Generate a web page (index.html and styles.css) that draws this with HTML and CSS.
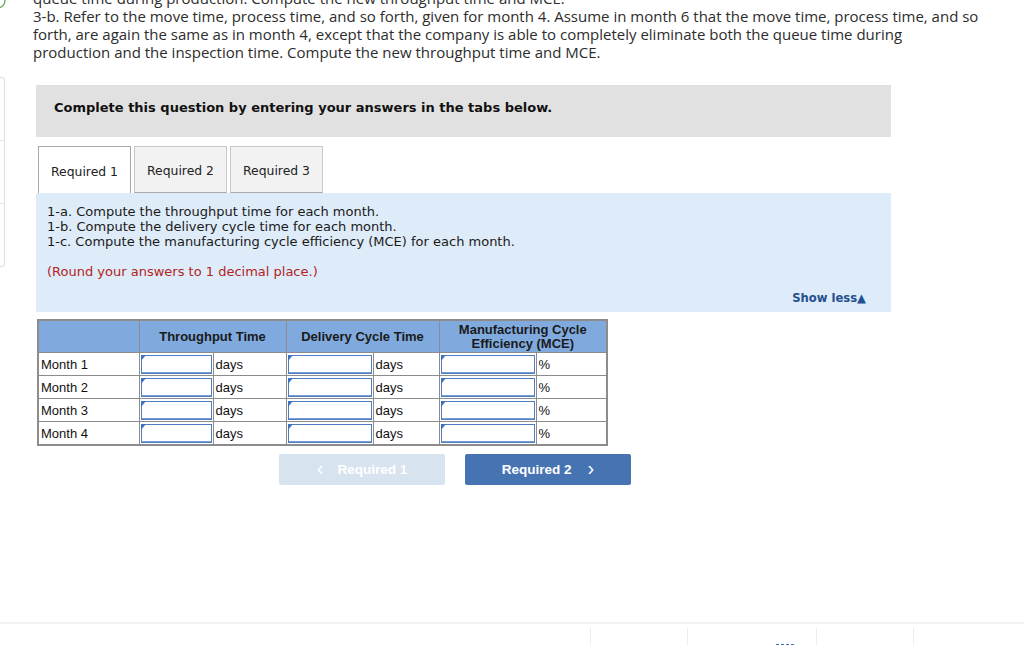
FILE: index.html
```html
<!DOCTYPE html>
<html>
<head>
<meta charset="utf-8">
<link rel="stylesheet" href="styles.css">
</head>
<body>
<div class="page">
  <div class="side">
    <svg class="check-arc" width="8" height="10" viewBox="0 0 8 10"><path d="M5 -1 A 9 9 0 0 1 -1 8" fill="none" stroke="#6aa84f" stroke-width="1.3"/></svg>
    <div class="side-box">
      <div class="side-cell"></div>
      <div class="side-cell"></div>
      <div class="side-cell last"></div>
    </div>
  </div>
  <div class="main">
    <div class="intro">
      <p class="cut">queue time during production. Compute the new throughput time and MCE.</p>
      <p>3-b. Refer to the move time, process time, and so forth, given for month 4. Assume in month 6 that the move time, process time, and so forth, are again the same as in month 4, except that the company is able to completely eliminate both the queue time during production and the inspection time. Compute the new throughput time and MCE.</p>
    </div>
    <div class="quiz">
      <div class="instr">Complete this question by entering your answers in the tabs below.</div>
      <div class="tabs">
        <div class="tab active">Required 1</div>
        <div class="tab">Required 2</div>
        <div class="tab">Required 3</div>
        <div class="tab-rest"></div>
      </div>
      <div class="panel">
        <div class="q">1-a. Compute the throughput time for each month.<br>1-b. Compute the delivery cycle time for each month.<br>1-c. Compute the manufacturing cycle efficiency (MCE) for each month.</div>
        <div class="round">(Round your answers to 1 decimal place.)</div>
        <div class="show-less">Show less&#9650;</div>
      </div>
      <table class="grid">
        <colgroup>
          <col class="c0"><col class="c1"><col class="c2"><col class="c3"><col class="c4"><col class="c5"><col class="c6">
        </colgroup>
        <thead>
          <tr>
            <th></th>
            <th colspan="2">Throughput Time</th>
            <th colspan="2">Delivery Cycle Time</th>
            <th colspan="2" class="mce">Manufacturing Cycle<br>Efficiency (MCE)</th>
          </tr>
        </thead>
        <tbody>
          <tr><td>Month 1</td><td class="in"><div class="box"></div></td><td>days</td><td class="in"><div class="box"></div></td><td>days</td><td class="in"><div class="box"></div></td><td>%</td></tr>
          <tr><td>Month 2</td><td class="in"><div class="box"></div></td><td>days</td><td class="in"><div class="box"></div></td><td>days</td><td class="in"><div class="box"></div></td><td>%</td></tr>
          <tr><td>Month 3</td><td class="in"><div class="box"></div></td><td>days</td><td class="in"><div class="box"></div></td><td>days</td><td class="in"><div class="box"></div></td><td>%</td></tr>
          <tr><td>Month 4</td><td class="in"><div class="box"></div></td><td>days</td><td class="in"><div class="box"></div></td><td>days</td><td class="in"><div class="box"></div></td><td>%</td></tr>
        </tbody>
      </table>
      <div class="nav">
        <div class="btn prev"><span class="chev">&lsaquo;</span>Required 1</div>
        <div class="btn next">Required 2<span class="chev right">&rsaquo;</span></div>
      </div>
    </div>
  </div>
</div>
<div class="footer">
  <div class="f-seg s1"></div>
  <div class="f-seg s2"></div>
  <div class="f-seg s3"><span class="f-mark"></span></div>
  <div class="f-seg s4"></div>
  <div class="f-seg s5"></div>
</div>
</body>
</html>
```
FILE: styles.css
```css
html, body {
  margin: 0;
  padding: 0;
  background: #fff;
}
body {
  width: 1024px;
  height: 645px;
  overflow: hidden;
}
.page {
  display: flex;
  height: 622px;
}
.side {
  width: 5px;
  flex: none;
  display: flex;
  flex-direction: column;
}
.check-arc {
  display: block;
}
.side-box {
  margin-top: 67px;
  width: 4px;
  border: 1px solid #dedede;
  border-left: none;
  border-radius: 0 4px 4px 0;
}
.side-cell {
  height: 62px;
  border-bottom: 1px solid #e6e6e6;
}
.side-cell.last {
  border-bottom: none;
}
.main {
  flex: 1;
}
.intro {
  margin-top: -11px;
  padding-left: 28px;
  font-family: "Open Sans", "Liberation Sans", sans-serif;
  font-size: 15px;
  line-height: 18px;
  color: #2d2d2d;
  width: 947px;
}
.intro p {
  margin: 0;
}
.quiz {
  padding-left: 31px;
  width: 855px;
  margin-top: 24px;
}
.instr {
  background: #e1e1e1;
  height: 52px;
  box-sizing: border-box;
  padding: 15px 0 0 18px;
  font-family: "DejaVu Sans", Verdana, sans-serif;
  font-weight: bold;
  font-size: 13px;
  line-height: 16px;
  color: #111;
}
.tabs {
  display: flex;
  margin-top: 9px;
  padding-left: 2px;
  gap: 3px;
  height: 47px;
}
.tab {
  width: 93px;
  box-sizing: border-box;
  border: 1px solid #c8c8c8;
  border-bottom: 1px solid #a9a9a9;
  background: #f2f2f2;
  font-family: "DejaVu Sans", Verdana, sans-serif;
  font-size: 12.4px;
  color: #222;
  display: flex;
  align-items: center;
  justify-content: center;
  padding-top: 2px;
}
.tab.active {
  background: #fff;
  border-color: #a9a9a9;
  border-bottom: none;
}
.tab-rest {
  flex: 1;
}
.panel {
  background: #deebf8;
  padding: 11px 25px 8px 11px;
  font-family: "DejaVu Sans", Verdana, sans-serif;
  font-size: 13px;
  line-height: 15px;
  color: #1a1a1a;
  height: 119px;
  box-sizing: border-box;
}
.round {
  margin-top: 15px;
  color: #b32424;
}
.show-less {
  text-align: right;
  margin-top: 12px;
  font-weight: bold;
  font-size: 11.6px;
  color: #24508f;
}
.grid {
  margin-top: 7px;
  margin-left: 1px;
  border-collapse: collapse;
  table-layout: fixed;
  width: 569px;
  border: 2px solid #8c8c8c;
  font-family: "Liberation Sans", Arial, sans-serif;
  font-size: 13px;
  color: #111;
}
.c0 { width: 101px; }
.c1 { width: 74px; }
.c2 { width: 73px; }
.c3 { width: 87px; }
.c4 { width: 66px; }
.c5 { width: 97px; }
.c6 { width: 71px; }
.grid th {
  background: #80aade;
  border: 1px solid #8c8c8c;
  height: 31px;
  font-weight: bold;
  font-size: 13px;
  padding: 0;
  color: #1a1a1a;
}
.grid th.mce {
  font-size: 13px;
  line-height: 14px;
}
.grid td {
  border: 1px solid #8c8c8c;
  height: 20px;
  padding: 0 0 0 2px;
  background: #fff;
}
.grid td.in {
  padding: 1px;
}
.box {
  position: relative;
  height: 19px;
  box-sizing: border-box;
  border: 1px solid #4f7dbf;
  box-shadow: inset 0 -1px 0 #7b9fd2;
}
.box::before {
  content: "";
  position: absolute;
  left: -1px;
  top: -1px;
  border-top: 6px solid #3f72c0;
  border-right: 5px solid transparent;
}
.nav {
  display: flex;
  gap: 20px;
  margin-top: 8px;
  margin-left: 243px;
}
.btn {
  width: 166px;
  height: 31px;
  box-sizing: border-box;
  border-radius: 2px;
  display: flex;
  align-items: center;
  justify-content: center;
  font-family: "Liberation Sans", Arial, sans-serif;
  font-weight: bold;
  font-size: 13.5px;
  color: #fff;
}
.btn.prev {
  background: #d8e3f0;
}
.btn.next {
  background: #4674b3;
}
.chev {
  font-weight: normal;
  font-size: 20px;
  margin-right: 14px;
  margin-top: -2px;
}
.chev.right {
  margin-right: 0;
  margin-left: 16px;
}
.footer {
  height: 23px;
  border-top: 2px solid #f1f1f1;
  display: flex;
  padding-top: 4px;
  box-sizing: border-box;
}
.f-seg {
  height: 100%;
  border-left: 1px solid #ececec;
}
.s1 { width: 590px; border-left: none; }
.s2 { width: 96px; }
.s3 { width: 128px; position: relative; }
.s4 { width: 96px; }
.s5 { flex: 1; }
.f-mark {
  position: absolute;
  left: 88px;
  top: 16px;
  width: 18px;
  height: 2px;
  border-top: 1px dashed #3e6fb8;
}
```
